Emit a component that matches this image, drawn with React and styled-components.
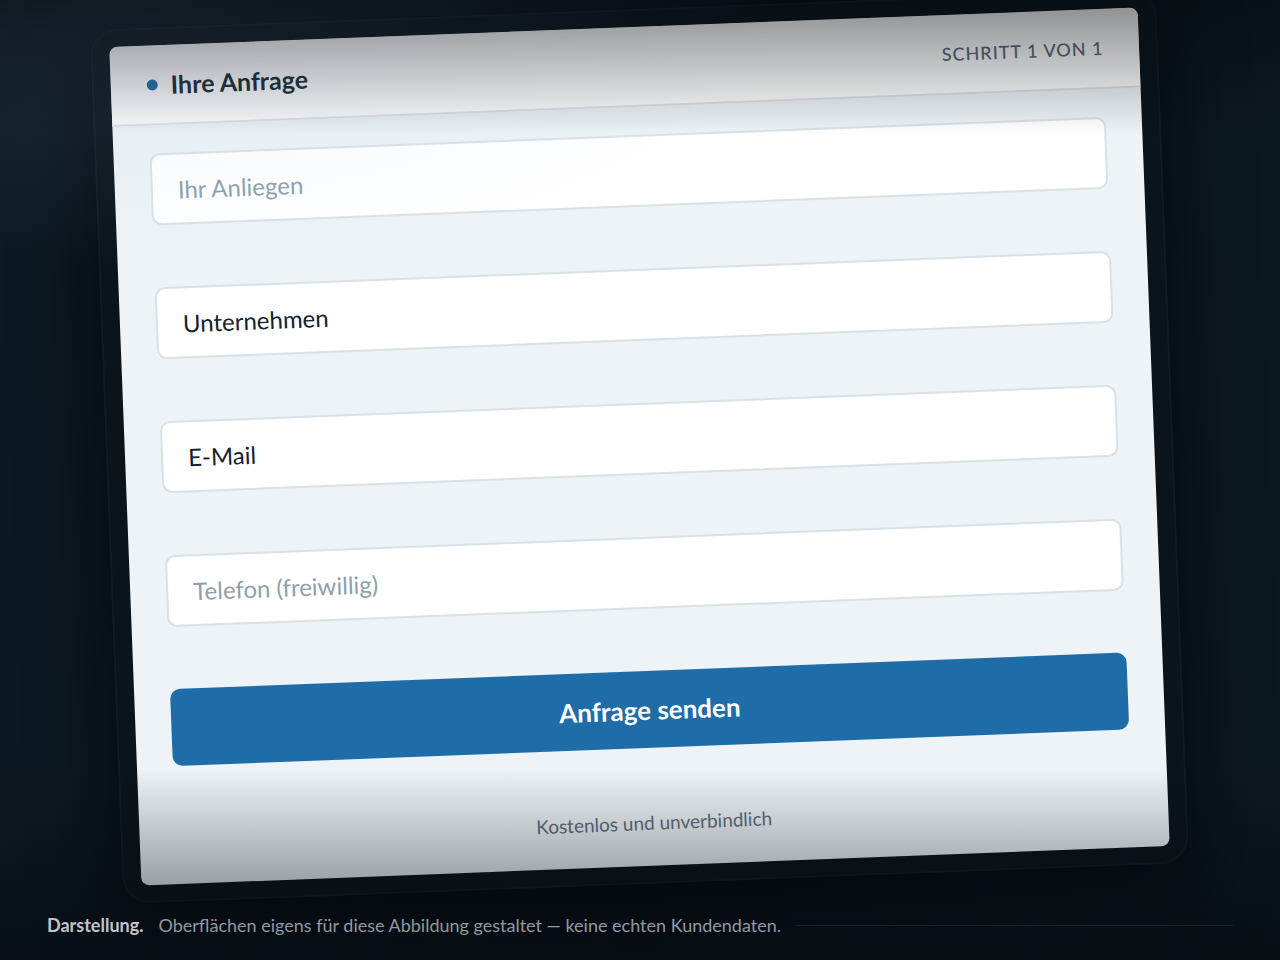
import React from "react";
import styled, { createGlobalStyle } from "styled-components";

const fields = [
	{ id: "anliegen", label: "Ihr Anliegen", muted: true },
	{ id: "unternehmen", label: "Unternehmen" },
	{ id: "email", label: "E-Mail", type: "email" },
	{ id: "telefon", label: "Telefon (freiwillig)", type: "tel", muted: true },
];

function App() {
	return (
		<Page>
			<GlobalStyle />
			<Device>
				<Screen>
					<Header>
						<Title>
							<Dot />
							Ihre Anfrage
						</Title>
						<Step>Schritt 1 von 1</Step>
					</Header>
					<Form onSubmit={(e) => e.preventDefault()}>
						{fields.map(({ id, label, type, muted }) => (
							<Field
								key={id}
								id={id}
								type={type || "text"}
								aria-label={label}
								placeholder={label}
								$muted={muted}
							/>
						))}
						<Submit type="submit">Anfrage senden</Submit>
						<Note>Kostenlos und unverbindlich</Note>
					</Form>
				</Screen>
			</Device>
			<Shade />
			<Caption>
				<strong>Darstellung.</strong>
				<span>Oberflächen eigens für diese Abbildung gestaltet — keine echten Kundendaten.</span>
				<Rule />
			</Caption>
		</Page>
	);
}

export default App;

const GlobalStyle = createGlobalStyle`
	* {
		box-sizing: border-box;
	}

	body {
		margin: 0;
		background: #070d15;
		font-family: Lato, "Open Sans", sans-serif;
	}
`

const Page = styled.main`
	position: relative;
	min-height: 100vh;
	display: flex;
	flex-direction: column;
	align-items: center;
	padding: 9px 47px 21px;
	overflow: hidden;
	background: linear-gradient(90deg, #0d1922, #0a141c 50%, #0c1820);
`

const Device = styled.section`
	flex: 1;
	width: 90%;
	display: flex;
	padding: 18px 19px;
	border-radius: 28px;
	background: #0b141b;
	box-shadow: inset 0 0 0 2px rgba(255, 255, 255, 0.03), 0 24px 80px rgba(2, 4, 9, 0.75);
	transform: rotate(-2.2deg);
`

const Screen = styled.div`
	flex: 1;
	display: flex;
	flex-direction: column;
	border-radius: 8px;
	overflow: hidden;
	background: #edf3f6;
`

const Header = styled.header`
	display: flex;
	align-items: center;
	justify-content: space-between;
	height: 80px;
	padding: 0 36px;
	background: #ffffff;
	border-bottom: 2px solid #dde4e9;
`

const Title = styled.h1`
	display: flex;
	align-items: center;
	gap: 13px;
	margin: 0;
	font-size: 25px;
	font-weight: 700;
	color: #172834;
`

const Dot = styled.span`
	width: 11px;
	height: 11px;
	border-radius: 50%;
	background: #1f6da8;
`

const Step = styled.span`
	font-size: 18px;
	font-weight: 500;
	letter-spacing: 1px;
	text-transform: uppercase;
	color: #5a6b78;
`

const Form = styled.form`
	flex: 1;
	display: flex;
	flex-direction: column;
	justify-content: space-between;
	padding: 28px 36px 31px;
`

const Field = styled.input`
	width: 100%;
	height: 72px;
	padding: 0 25px;
	border: 2px solid #d9e1e7;
	border-radius: 10px;
	background: #ffffff;
	font-family: inherit;
	font-size: 24px;
	color: #14222d;

	&::placeholder {
		color: ${(props) => (props.$muted ? "#8f9fab" : "#14222d")};
		opacity: 1;
	}
`

const Submit = styled.button`
	height: 77px;
	border: 0;
	border-radius: 10px;
	background: #1f6da8;
	color: #ffffff;
	font-family: inherit;
	font-size: 26px;
	font-weight: 700;
	cursor: pointer;
`

const Note = styled.p`
	margin: 0;
	text-align: center;
	font-size: 19px;
	line-height: 25px;
	color: #5f707d;
`

/* light and vignette lying over the whole scene */
const Shade = styled.div`
	position: absolute;
	inset: 0;
	pointer-events: none;
	background:
		linear-gradient(180deg, rgba(4, 8, 13, 0.47), transparent 14%, transparent 80%, rgba(4, 8, 13, 0.58)),
		radial-gradient(ellipse 50% 26% at 12% 2%, rgba(160, 195, 240, 0.13), transparent);
`

const Caption = styled.footer`
	position: relative;
	align-self: stretch;
	display: flex;
	align-items: center;
	gap: 15px;
	margin-top: 28px;
	font-size: 18px;
	line-height: 27px;
	color: #9299a0;

	strong {
		color: #c0c5c9;
	}
`

const Rule = styled.i`
	flex: 1;
	height: 1px;
	background: #1a2229;
`
